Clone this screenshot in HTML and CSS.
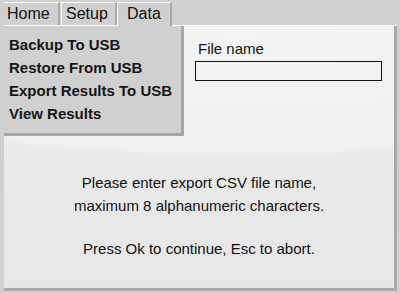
FILE: index.html
```html
<!DOCTYPE html>
<html lang="en">
<head>
    <meta charset="UTF-8">
    <meta name="viewport" content="width=device-width, initial-scale=1.0">
    <title>Data - Export</title>
    <link rel="stylesheet" href="styles.css">
</head>
<body>
    <div class="tabs">
        <div class="tab tab-home">Home</div>
        <div class="tab tab-setup">Setup</div>
        <div class="tab tab-data active">Data</div>
    </div>

    <div class="panel">
        <div class="top-row">
            <ul class="menu">
                <li>Backup To USB</li>
                <li>Restore From USB</li>
                <li>Export Results To USB</li>
                <li>View Results</li>
            </ul>
            <div class="field">
                <label for="fileName">File name</label>
                <input type="text" id="fileName" name="fileName">
            </div>
        </div>

        <div class="message">
            <p>Please enter export CSV file name,<br>maximum 8 alphanumeric characters.</p>
            <p>Press Ok to continue, Esc to abort.</p>
        </div>
    </div>
</body>
</html>
```

FILE: styles.css
```css
body {
    font-family: "Liberation Sans", Arial, sans-serif;
    font-size: 15px;
    background-color: #d0d0d0;
    margin: 0;
    padding: 2px 3px 0 4px;
    color: #111;
}
.tabs {
    display: flex;
    border-bottom: 1px solid #fff;
    height: 23px;
}
.tab {
    box-sizing: border-box;
    height: 23px;
    border-top: 1px solid #fff;
    border-right: 2px solid #a9a9a9;
    line-height: 21px;
    padding-left: 4px;
    font-size: 16px;
    color: #111;
}
.tab-home {
    width: 56px;
    padding-left: 3px;
    margin-right: 1px;
}
.tab-setup {
    width: 56px;
    border-left: 1px solid #fff;
    padding-left: 4px;
}
.tab-data {
    width: 55px;
    border-left: 1px solid #fff;
    padding-left: 9px;
}
.tab.active {
    height: 24px;
    margin-bottom: -1px;
    background-color: #d0d0d0;
}
.panel {
    height: 262px;
    background: radial-gradient(ellipse 140% 50% at 60% 0%, #f4f4f4 0, #f0f0f0 96%, rgba(240,240,240,0) 100%),
                linear-gradient(#efefef, #e9e9e9 60%, #e6e6e6);
    border-right: 3px solid #a9a9a9;
    border-bottom: 3px solid #a9a9a9;
}
.top-row {
    display: flex;
    align-items: flex-start;
}
.menu {
    list-style: none;
    margin: 0;
    width: 169px;
    padding: 7px 3px 8px 5px;
    background-color: #d0d0d0;
    border-right: 3px solid #a6a6a6;
    border-bottom: 3px solid #a6a6a6;
}
.menu li {
    font-weight: bold;
    line-height: 23px;
    color: #151515;
    white-space: nowrap;
}
.field {
    display: flex;
    flex-direction: column;
    padding: 14px 0 0 11px;
}
.field label {
    padding-left: 3px;
    line-height: 17px;
    margin-bottom: 4px;
}
.field input {
    box-sizing: border-box;
    width: 187px;
    height: 20px;
    margin: 0;
    border: 1px solid #111;
    background: transparent;
}
.message {
    text-align: center;
    margin-top: 35px;
}
.message p {
    margin: 0;
    line-height: 23px;
}
.message p + p {
    margin-top: 20px;
}
```
